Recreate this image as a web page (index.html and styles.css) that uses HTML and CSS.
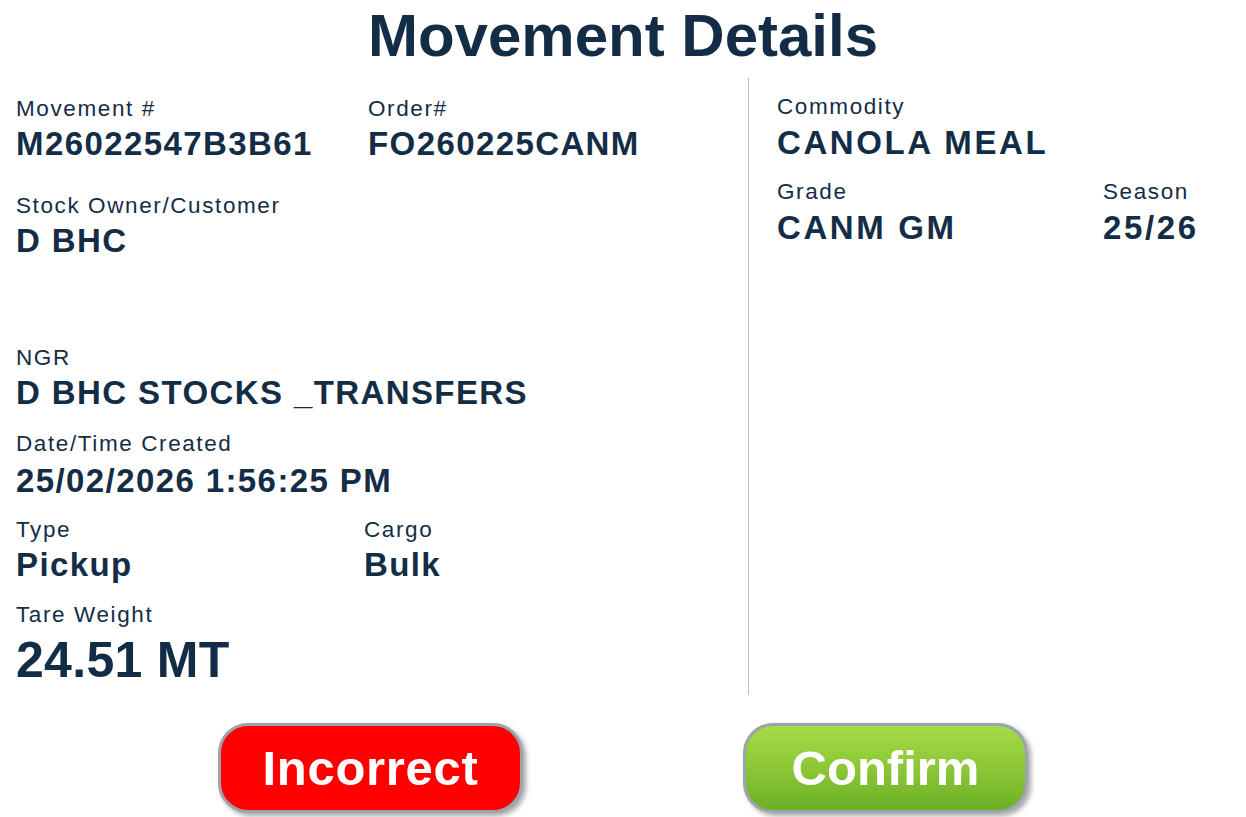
FILE: index.html
```html
<!DOCTYPE html>
<html lang="en">
<head>
<meta charset="utf-8">
<title>Movement Details</title>
<link rel="stylesheet" href="styles.css">
</head>
<body>
<h1 class="title">Movement Details</h1>
<div class="details">
  <div class="col-left">
    <div class="row row-first">
      <div class="field w-352">
        <div class="label">Movement #</div>
        <div class="value">M26022547B3B61</div>
      </div>
      <div class="field">
        <div class="label">Order#</div>
        <div class="value">FO260225CANM</div>
      </div>
    </div>
    <div class="field field-owner">
      <div class="label">Stock Owner/Customer</div>
      <div class="value">D BHC</div>
    </div>
    <div class="field field-gap">
      <div class="label">NGR</div>
      <div class="value">D BHC STOCKS _TRANSFERS</div>
    </div>
    <div class="field field-date">
      <div class="label">Date/Time Created</div>
      <div class="value value-date">25/02/2026 1:56:25 PM</div>
    </div>
    <div class="row row-gap">
      <div class="field w-348">
        <div class="label">Type</div>
        <div class="value">Pickup</div>
      </div>
      <div class="field">
        <div class="label">Cargo</div>
        <div class="value">Bulk</div>
      </div>
    </div>
    <div class="field">
      <div class="label">Tare Weight</div>
      <div class="value value-big">24.51 MT</div>
    </div>
  </div>
  <div class="col-right">
    <div class="field field-right-gap">
      <div class="label">Commodity</div>
      <div class="value value-right">CANOLA MEAL</div>
    </div>
    <div class="row">
      <div class="field w-326">
        <div class="label">Grade</div>
        <div class="value value-right">CANM GM</div>
      </div>
      <div class="field">
        <div class="label">Season</div>
        <div class="value value-right">25/26</div>
      </div>
    </div>
  </div>
</div>
<div class="actions">
  <button class="btn btn-red" type="button">Incorrect</button>
  <button class="btn btn-green" type="button">Confirm</button>
</div>
</body>
</html>
```
FILE: styles.css
```css
html, body {
  margin: 0;
  padding: 0;
  background: #ffffff;
}
body {
  font-family: "Liberation Sans", Arial, sans-serif;
  color: #142d46;
  width: 1246px;
  height: 817px;
  overflow: hidden;
}
.title {
  margin: 0;
  font-size: 60px;
  line-height: 72px;
  font-weight: bold;
  text-align: center;
  color: #142d46;
}
.details {
  display: flex;
  margin-top: 6px;
  height: 617px;
}
.col-left {
  width: 732px;
  padding: 18px 0 0 16px;
}
.col-right {
  flex: 1;
  border-left: 1px solid #bdbdbd;
  padding: 16px 0 0 28px;
}
.row {
  display: flex;
}
.row-first {
  margin-bottom: 28px;
}
.row-gap {
  margin-bottom: 16px;
}
.w-352 { width: 352px; }
.w-348 { width: 348px; }
.w-326 { width: 326px; }
.field-owner {
  margin-bottom: 83px;
}
.field-gap {
  margin-bottom: 17px;
}
.field-date {
  margin-bottom: 12px;
}
.field-right-gap {
  margin-bottom: 14px;
}
.label {
  font-size: 22.5px;
  line-height: 26px;
  letter-spacing: 1.6px;
  white-space: nowrap;
}
.value {
  font-size: 33px;
  line-height: 43px;
  font-weight: bold;
  letter-spacing: 1.4px;
  white-space: nowrap;
}
.value-date {
  line-height: 48px;
  padding-top: 0;
}
.value-right {
  font-size: 33px;
  line-height: 45px;
  letter-spacing: 2.6px;
}
.value-big {
  font-size: 50px;
  line-height: 64px;
  letter-spacing: 0.3px;
}
.actions {
  display: flex;
  gap: 220px;
  padding: 28px 0 0 218px;
}
.btn {
  box-sizing: border-box;
  height: 90px;
  border: 3px solid #9ba3ac;
  border-radius: 30px;
  font-family: "Liberation Sans", Arial, sans-serif;
  font-size: 49px;
  line-height: 84px;
  font-weight: bold;
  color: #ffffff;
  padding: 0;
  box-shadow: 3px 3px 5px rgba(0, 0, 0, 0.35);
  cursor: pointer;
}
.btn-red {
  width: 305px;
  background: #ff0000;
  letter-spacing: 0.7px;
}
.btn-green {
  width: 285px;
  background: linear-gradient(to bottom, #a6da46 0%, #8cc737 50%, #6caf25 100%);
}
```
